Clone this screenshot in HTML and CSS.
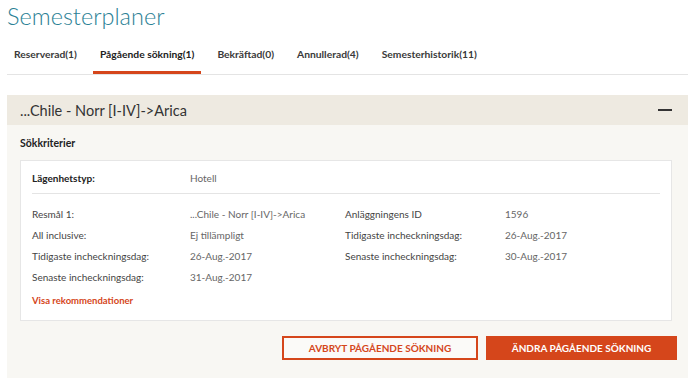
FILE: index.html
```html
<!DOCTYPE html>
<html lang="sv">
<head>
<meta charset="UTF-8">
<title>Semesterplaner</title>
<link rel="stylesheet" href="styles.css">
</head>
<body>
<div class="page">
  <h1 class="title">Semesterplaner</h1>

  <ul class="tabs">
    <li class="tab">Reserverad(1)</li>
    <li class="tab active">Pågående sökning(1)</li>
    <li class="tab">Bekräftad(0)</li>
    <li class="tab">Annullerad(4)</li>
    <li class="tab">Semesterhistorik(11)</li>
  </ul>

  <div class="panel">
    <div class="panel-head">
      <span class="panel-title">...Chile - Norr [I-IV]-&gt;Arica</span>
      <span class="minus"></span>
    </div>
    <div class="panel-body">
      <div class="section-title">Sökkriterier</div>
      <div class="box">
        <div class="grid top">
          <span class="label strong">Lägenhetstyp:</span>
          <span class="value">Hotell</span>
        </div>
        <div class="sep"></div>
        <div class="grid">
          <span class="label">Resmål 1:</span>
          <span class="value">...Chile - Norr [I-IV]-&gt;Arica</span>
          <span class="label">Anläggningens ID</span>
          <span class="value">1596</span>

          <span class="label">All inclusive:</span>
          <span class="value">Ej tillämpligt</span>
          <span class="label">Tidigaste incheckningsdag:</span>
          <span class="value">26-Aug.-2017</span>

          <span class="label">Tidigaste incheckningsdag:</span>
          <span class="value">26-Aug.-2017</span>
          <span class="label">Senaste incheckningsdag:</span>
          <span class="value">30-Aug.-2017</span>

          <span class="label">Senaste incheckningsdag:</span>
          <span class="value">31-Aug.-2017</span>
        </div>
        <a class="link">Visa rekommendationer</a>
      </div>
      <div class="actions">
        <button class="btn btn-outline">AVBRYT PÅGÅENDE SÖKNING</button>
        <button class="btn btn-fill">ÄNDRA PÅGÅENDE SÖKNING</button>
      </div>
    </div>
  </div>
</div>
</body>
</html>
```

FILE: styles.css
```css
body {
	margin: 0;
	background: #ffffff;
	font-family: Lato, "Open Sans", Arial, sans-serif;
	color: #333;
}
.page {
	padding: 0 2px 0 7px;
}
.title {
	margin: 0;
	padding-top: 1px;
	font-size: 23.5px;
	line-height: 30px;
	font-weight: 300;
	color: #2b8195;
}
.tabs {
	display: flex;
	gap: 9px;
	list-style: none;
	margin: 8px 0 0 0;
	padding: 0;
	border-bottom: 1px solid #e4e4e4;
}
.tab {
	padding: 8px 7px 10px;
	font-size: 10.3px;
	line-height: 14px;
	font-weight: 700;
	color: #3a3a3a;
	border-bottom: 3px solid transparent;
}
.tab.active {
	color: #222;
	border-bottom-color: #d5461b;
}
.panel {
	margin-top: 20px;
	background: #f8f7f3;
	height: 290px;
}
.panel-head {
	display: flex;
	align-items: center;
	justify-content: space-between;
	height: 30px;
	padding: 0 16px 0 13px;
	background: #eeeae1;
}
.panel-title {
	font-size: 14.5px;
	color: #333;
}
.minus {
	width: 14px;
	height: 2px;
	background: #333;
}
.panel-body {
	padding: 10px 16px 0 13px;
}
.section-title {
	font-size: 10.5px;
	line-height: 16px;
	font-weight: 700;
	color: #222;
}
.box {
	margin-top: 9px;
	background: #fff;
	border: 1px solid #e6e6e6;
	padding: 9px 11px 9px;
}
.grid {
	display: grid;
	grid-template-columns: 158px 155px 160px 1fr;
	font-size: 10px;
	line-height: 21px;
}
.grid.top {
	line-height: 16px;
	padding-bottom: 7px;
}
.sep {
	height: 1px;
	background: #e4e4e4;
	margin-bottom: 10px;
}
.label {
	color: #444;
}
.label.strong {
	font-weight: 700;
	color: #222;
}
.value {
	color: #666;
}
.link {
	display: block;
	margin-top: 2px;
	font-size: 9.5px;
	line-height: 21px;
	font-weight: 700;
	color: #d5461b;
}
.actions {
	display: flex;
	justify-content: flex-end;
	gap: 8px;
	margin: 15px -5px 0 0;
}
.btn {
	height: 24px;
	font-family: inherit;
	font-size: 10px;
	font-weight: 700;
	border: 2px solid #d5461b;
	padding: 0;
}
.btn-outline {
	width: 196px;
	background: #fbfaf8;
	color: #d5461b;
}
.btn-fill {
	width: 191px;
	background: #d5461b;
	color: #fff;
}
```
